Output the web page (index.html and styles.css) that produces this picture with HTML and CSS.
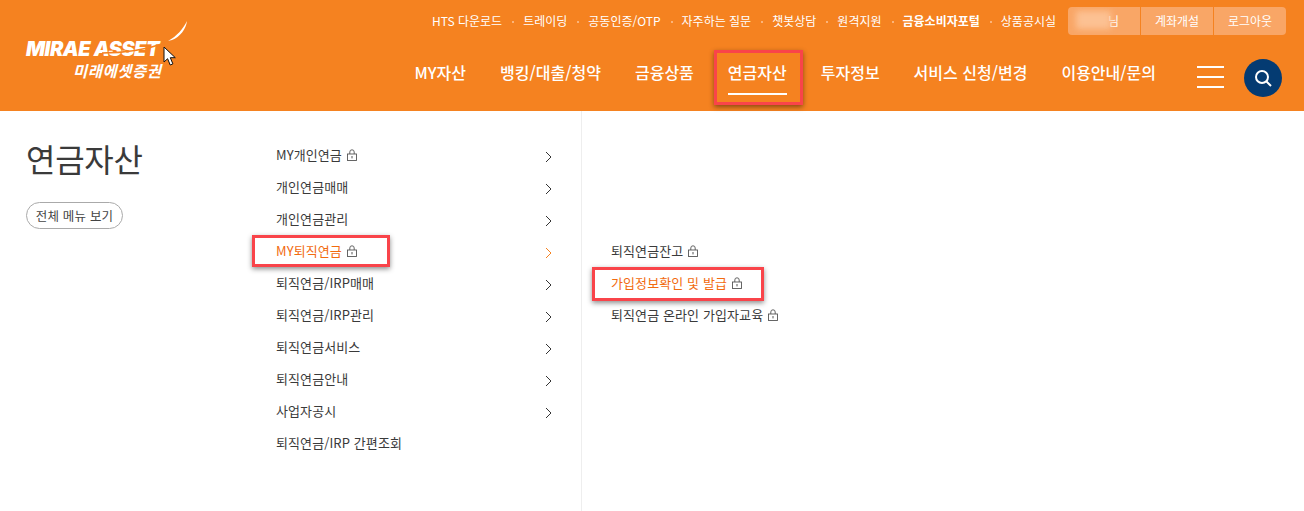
FILE: index.html
```html
<!DOCTYPE html>
<html lang="ko">
<head>
    <meta charset="UTF-8">
    <title>연금자산</title>
    <link rel="stylesheet" href="styles.css">
</head>
<body>
    <svg class="icon-defs" width="0" height="0">
        <symbol id="lock" viewBox="0 0 10 12">
            <path d="M2.8 5V3a2.2 2.2 0 0 1 4.4 0v2" fill="none" stroke="#555" stroke-width="0.9"/>
            <rect x="0.5" y="5" width="9" height="6.5" fill="none" stroke="#555" stroke-width="0.9"/>
            <path d="M5 7v2.4" stroke="#555" stroke-width="1"/>
        </symbol>
        <symbol id="chev" viewBox="0 0 7 12">
            <path d="M1 1l5 5-5 5" fill="none" stroke="currentColor" stroke-width="1"/>
        </symbol>
    </svg>

    <header class="header">
        <div class="logo">
            <span class="logo-en">MIRAE ASSET</span>
            <span class="logo-ko">미래에셋증권</span>
            <svg class="logo-swoosh" width="170" height="60" viewBox="0 0 170 60">
                <path d="M76 53C98 53 122 49 139 43" fill="none" stroke="#f58220" stroke-width="1.6"/>
                <path d="M142 41C151 36 157 29 161 21C160 29 154 37 146 40Z" fill="#fff"/>
            </svg>
            <svg class="cursor" width="14" height="21" viewBox="0 0 14 21">
                <path d="M1 1v15l3.6-3.3 2.6 6.3 2.7-1.1-2.6-6.2h5z" fill="#fff" stroke="#111" stroke-width="1"/>
            </svg>
        </div>
        <div class="header-right">
            <div class="util">
                <a class="util-link">HTS 다운로드</a>
                <a class="util-link">트레이딩</a>
                <a class="util-link">공동인증/OTP</a>
                <a class="util-link">자주하는 질문</a>
                <a class="util-link">챗봇상담</a>
                <a class="util-link">원격지원</a>
                <a class="util-link util-bold">금융소비자포털</a>
                <a class="util-link">상품공시실</a>
                <div class="account">
                    <span class="account-btn account-name"><i class="blur"></i>님</span>
                    <span class="account-btn">계좌개설</span>
                    <span class="account-btn">로그아웃</span>
                </div>
            </div>
            <div class="gnb-row">
                <nav class="gnb">
                    <a class="gnb-item">MY자산</a>
                    <a class="gnb-item">뱅킹/대출/청약</a>
                    <a class="gnb-item">금융상품</a>
                    <a class="gnb-item active">연금자산<i class="mark mark-gnb"></i></a>
                    <a class="gnb-item">투자정보</a>
                    <a class="gnb-item">서비스 신청/변경</a>
                    <a class="gnb-item">이용안내/문의</a>
                </nav>
                <div class="burger"><span></span><span></span><span></span></div>
                <div class="search">
                    <svg width="20" height="20" viewBox="0 0 20 20">
                        <circle cx="9" cy="9" r="6" fill="none" stroke="#fff" stroke-width="2"/>
                        <path d="M13.5 13.5L18 18" stroke="#fff" stroke-width="2"/>
                    </svg>
                </div>
            </div>
        </div>
    </header>

    <main class="menu">
        <section class="side">
            <h1 class="side-title">연금자산</h1>
            <a class="side-btn">전체 메뉴 보기</a>
        </section>

        <ul class="depth2">
            <li class="row"><span>MY개인연금</span><svg class="lock"><use href="#lock"/></svg><svg class="chev"><use href="#chev"/></svg></li>
            <li class="row"><span>개인연금매매</span><svg class="chev"><use href="#chev"/></svg></li>
            <li class="row"><span>개인연금관리</span><svg class="chev"><use href="#chev"/></svg></li>
            <li class="row on"><span>MY퇴직연금</span><svg class="lock"><use href="#lock"/></svg><svg class="chev"><use href="#chev"/></svg><i class="mark mark-row"></i></li>
            <li class="row"><span>퇴직연금/IRP매매</span><svg class="chev"><use href="#chev"/></svg></li>
            <li class="row"><span>퇴직연금/IRP관리</span><svg class="chev"><use href="#chev"/></svg></li>
            <li class="row"><span>퇴직연금서비스</span><svg class="chev"><use href="#chev"/></svg></li>
            <li class="row"><span>퇴직연금안내</span><svg class="chev"><use href="#chev"/></svg></li>
            <li class="row"><span>사업자공시</span><svg class="chev"><use href="#chev"/></svg></li>
            <li class="row"><span>퇴직연금/IRP 간편조회</span></li>
        </ul>

        <ul class="depth3">
            <li class="row"><span>퇴직연금잔고</span><svg class="lock"><use href="#lock"/></svg></li>
            <li class="row on"><span>가입정보확인 및 발급</span><svg class="lock"><use href="#lock"/></svg><i class="mark mark-sub"></i></li>
            <li class="row"><span>퇴직연금 온라인 가입자교육</span><svg class="lock"><use href="#lock"/></svg></li>
        </ul>
    </main>
</body>
</html>
```

FILE: styles.css
```css
:root {
  --orange: #f58220;
  --text: #3a3a3a;
  --red: #f9444a;
}
* {
  box-sizing: border-box;
}
body {
  margin: 0;
  height: 511px;
  overflow: hidden;
  background: #fff;
  color: var(--text);
  font-family: "Noto Sans CJK KR", "Noto Sans", sans-serif;
}
.icon-defs {
  display: block;
  height: 0;
}
ul {
  list-style: none;
  margin: 0;
  padding: 0;
}

/* header */
.header {
  height: 111px;
  background: var(--orange);
  display: flex;
  justify-content: space-between;
  color: #fff;
}
.logo {
  position: relative;
  width: 170px;
  margin-left: 26px;
  padding-top: 39px;
  display: flex;
  flex-direction: column;
  line-height: 1;
}
.logo-en {
  font-family: "Inter", "Liberation Sans", sans-serif;
  font-size: 20px;
  font-weight: 900;
  font-style: italic;
  letter-spacing: -0.5px;
  height: 22px;
  white-space: nowrap;
}
.logo-ko {
  font-family: "Inter", "Noto Sans CJK KR", sans-serif;
  font-size: 15.5px;
  font-weight: 700;
  font-style: italic;
  margin-left: 47px;
  margin-top: 3px;
  letter-spacing: 0.5px;
}
.logo-swoosh {
  position: absolute;
  left: 0;
  top: 0;
}
.cursor {
  position: absolute;
  left: 137px;
  top: 46px;
}
.header-right {
  display: flex;
  flex-direction: column;
  align-items: flex-end;
  padding-right: 18px;
}
.util {
  display: flex;
  align-items: center;
  height: 28px;
  margin-top: 7px;
  font-size: 12px;
}
.util-link {
  margin-right: 21px;
  margin-top: -2px;
  position: relative;
}
.util-link + .util-link::before {
  content: "";
  position: absolute;
  left: -11px;
  top: 9px;
  width: 2px;
  height: 2px;
  background: #fbb47a;
}
.util-bold {
  font-weight: 700;
}
.util-link:nth-last-child(2) {
  margin-right: 12px;
}
.account {
  display: flex;
  height: 28px;
  width: 218px;
  border-radius: 4px;
  overflow: hidden;
  gap: 1px;
}
.account-btn {
  flex: 1;
  display: flex;
  align-items: center;
  justify-content: center;
  padding-bottom: 2px;
  background: #f9a666;
  color: #fff;
}
.account-name {
  flex: none;
  width: 72px;
  justify-content: flex-end;
  padding-right: 21px;
  position: relative;
}
.blur {
  position: absolute;
  left: 8px;
  top: 4px;
  width: 35px;
  height: 18px;
  background: #fcc193;
  filter: blur(3px);
}
.gnb-row {
  display: flex;
  align-items: center;
  height: 76px;
  padding-right: 4px;
}
.gnb {
  display: flex;
  margin-right: 24px;
  font-size: 16px;
  font-weight: 500;
}
.gnb-item {
  position: relative;
  padding: 0 17px;
  line-height: 24px;
  margin-top: -2px;
}
.gnb-item.active::after {
  content: "";
  position: absolute;
  left: 17px;
  right: 17px;
  bottom: -11px;
  height: 2px;
  background: #fff;
}
.burger {
  width: 27px;
  display: flex;
  flex-direction: column;
  gap: 8px;
  margin-top: 7px;
  margin-right: 20px;
}
.burger span {
  display: block;
  height: 2px;
  background: #fff;
}
.search {
  width: 38px;
  height: 38px;
  margin-top: 10px;
  border-radius: 50%;
  background: #043b72;
  display: flex;
  align-items: center;
  justify-content: center;
}

/* red annotations lying over the menu */
.mark {
  position: absolute;
  border: 3px solid var(--red);
  box-shadow: 0 2px 5px rgba(0, 0, 0, 0.45);
  pointer-events: none;
}
.mark-gnb {
  left: 3px;
  right: 1px;
  top: -10px;
  bottom: -21px;
}
.mark-row {
  left: -24px;
  top: 0;
  width: 138px;
  height: 32px;
}
.mark-sub {
  left: -19px;
  top: 0;
  width: 172px;
  height: 34px;
}

/* menu */
.menu {
  display: flex;
  height: 400px;
}
.side {
  width: 251px;
  padding: 27px 0 0 26px;
}
.side-title {
  margin: 0;
  font-size: 32px;
  font-weight: 400;
  line-height: 40px;
  letter-spacing: -0.3px;
}
.side-btn {
  display: block;
  width: 97px;
  margin-top: 24px;
  height: 27px;
  line-height: 25px;
  text-align: center;
  border: 1px solid #aaa;
  border-radius: 14px;
  font-size: 12.5px;
  letter-spacing: 0.2px;
  white-space: nowrap;
  color: #444;
}
.depth2 {
  width: 331px;
  padding: 28px 0 0 25px;
  border-right: 1px solid #eee;
}
.depth3 {
  padding: 124px 0 0 29px;
}
.row {
  position: relative;
  display: flex;
  align-items: center;
  height: 32px;
  padding-bottom: 2px;
  font-size: 13px;
  letter-spacing: 0.1px;
}
.row.on {
  color: #f26b0f;
}
.lock {
  width: 10px;
  height: 12px;
  margin-left: 5px;
  margin-top: 2px;
}
.chev {
  width: 7px;
  height: 12px;
  position: absolute;
  left: 269px;
  top: 12px;
  color: #333;
}
.row.on .chev {
  color: var(--orange);
}
```
